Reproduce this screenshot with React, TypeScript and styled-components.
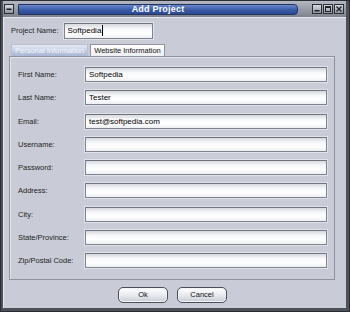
import React from 'react';
import styled, { createGlobalStyle } from 'styled-components';

const GlobalStyle = createGlobalStyle`
  html, body {
    margin: 0;
    padding: 0;
    background: #3a3e46;
  }
  * {
    box-sizing: border-box;
  }
`;

// 창 전체
const Window = styled.div`
  width: 350px;
  height: 312px;
  display: flex;
  flex-direction: column;
  background: #4c5059;
  border: 1px solid #2a2d33;
  padding: 0 3px 3px 2px;
  font-family: 'Liberation Sans', Arial, sans-serif;
  font-size: 7.5px;
  color: #1c1e22;
`;

// 제목 표시줄
const TitleBar = styled.div`
  height: 16px;
  display: flex;
  align-items: center;
  gap: 4px;
  padding: 0 2px 0 1px;
  background: linear-gradient(#b4b8c2, #7d828c);
`;

const TitleStrip = styled.div`
  flex: 1;
  height: 11px;
  display: flex;
  align-items: center;
  justify-content: center;
  border-radius: 0 4px 4px 0;
  border: 1px solid #23345e;
  background: linear-gradient(#6a86cc, #3a5aa6 55%, #2c4a94);
  color: #fff;
  font-weight: bold;
  font-size: 9px;
  letter-spacing: 0.2px;
  margin-right: 10px;
`;

const WinButton = styled.div`
  width: 10px;
  height: 10px;
  display: flex;
  align-items: center;
  justify-content: center;
  border: 1px solid #2a2d33;
  background: linear-gradient(#d8dbe2, #8f94a0);
`;

const WinButtons = styled.div`
  display: flex;
  gap: 1px;
`;

// 본문
const Body = styled.div`
  flex: 1;
  display: flex;
  flex-direction: column;
  background: #c9ccd7;
  border-top: 1px solid #e6e8ee;
  border-left: 1px solid #e6e8ee;
  padding: 4px 11px 0 5px;
`;

const ProjectRow = styled.div`
  display: flex;
  align-items: center;
  gap: 5px;
  padding-left: 2px;
  height: 17px;
`;

const Label = styled.span<{ $w?: number }>`
  width: ${(p) => (p.$w ? `${p.$w}px` : 'auto')};
  flex-shrink: 0;
  white-space: nowrap;
`;

const Field = styled.div<{ $w?: number; $h?: number }>`
  width: ${(p) => (p.$w ? `${p.$w}px` : 'auto')};
  flex: ${(p) => (p.$w ? 'none' : '1')};
  height: ${(p) => p.$h ?? 15}px;
  display: flex;
  align-items: center;
  padding: 0 3px;
  border: 1px solid #7e838e;
  border-top-color: #6e737e;
  background: linear-gradient(#d7d9df, #f7f8fa 35%, #ffffff 65%, #eceef2);
  box-shadow: 0 0 0 1px #dfe2e9;
  color: #000;
  font-size: 8px;
`;

const Caret = styled.span`
  display: inline-block;
  width: 1px;
  height: 11px;
  background: #000;
  margin-left: 1px;
`;

const Tabs = styled.div`
  display: flex;
  gap: 2px;
  margin: 5px 0 0 2px;
  height: 12px;
`;

const Tab = styled.div<{ $active?: boolean }>`
  display: flex;
  align-items: center;
  padding: 0 3px;
  height: 12px;
  border: 1px solid ${(p) => (p.$active ? '#b8c0d2' : '#8e939e')};
  border-bottom: none;
  background: ${(p) =>
    p.$active
      ? 'linear-gradient(#e2e8f4, #a9b7d4)'
      : 'linear-gradient(#ffffff, #eceef2)'};
  color: ${(p) => (p.$active ? '#f4f6fb' : '#111')};
  white-space: nowrap;
`;

const Panel = styled.div`
  height: 224px;
  display: flex;
  flex-direction: column;
  gap: 8.3px;
  padding: 10px 7px 0 8px;
  border: 1px solid #8d929d;
  box-shadow: inset 1px 1px 0 #e4e6ec;
`;

const FormRow = styled.div`
  display: flex;
  align-items: center;
`;

const Footer = styled.div`
  flex: 1;
  display: flex;
  justify-content: center;
  align-items: center;
  gap: 9px;
  padding: 1px 0 0 1px;
`;

const Button = styled.button`
  width: 50px;
  height: 16px;
  padding: 0;
  border: 1px solid #4a4e56;
  border-radius: 5px;
  background: linear-gradient(#ffffff, #e6e8ee 55%, #c7cad3);
  font-family: 'Liberation Sans', Arial, sans-serif;
  font-size: 7.5px;
  color: #111;
  box-shadow: inset 0 0 0 1px #f4f5f8;
`;

const fields: [string, string][] = [
  ['First Name:', 'Softpedia'],
  ['Last Name:', 'Tester'],
  ['Email:', 'test@softpedia.com'],
  ['Username:', ''],
  ['Password:', ''],
  ['Address:', ''],
  ['City:', ''],
  ['State/Province:', ''],
  ['Zip/Postal Code:', ''],
];

export default function App() {
  return (
    <>
      <GlobalStyle />
      <Window>
        <TitleBar>
          <WinButton>
            <svg width="6" height="6" viewBox="0 0 6 6">
              <rect x="0.5" y="2.5" width="5" height="1.5" fill="#222" />
            </svg>
          </WinButton>
          <TitleStrip>Add Project</TitleStrip>
          <WinButtons>
            <WinButton>
              <svg width="6" height="6" viewBox="0 0 6 6">
                <rect x="0.5" y="4" width="5" height="1.5" fill="#222" />
              </svg>
            </WinButton>
            <WinButton>
              <svg width="6" height="6" viewBox="0 0 6 6">
                <rect x="0.5" y="0.5" width="5" height="5" fill="none" stroke="#222" strokeWidth="1" />
                <rect x="0.5" y="0.5" width="5" height="1.5" fill="#222" />
              </svg>
            </WinButton>
            <WinButton>
              <svg width="6" height="6" viewBox="0 0 6 6">
                <path d="M0.5 0.5 L5.5 5.5 M5.5 0.5 L0.5 5.5" stroke="#222" strokeWidth="1.4" />
              </svg>
            </WinButton>
          </WinButtons>
        </TitleBar>
        <Body>
          <ProjectRow>
            <Label>Project Name:</Label>
            <Field $w={89} $h={16}>
              Softpedia
              <Caret />
            </Field>
          </ProjectRow>
          <Tabs>
            <Tab $active>Personal Information</Tab>
            <Tab>Website Information</Tab>
          </Tabs>
          <Panel>
            {fields.map(([label, value]) => (
              <FormRow key={label}>
                <Label $w={67}>{label}</Label>
                <Field>{value}</Field>
              </FormRow>
            ))}
          </Panel>
          <Footer>
            <Button>Ok</Button>
            <Button>Cancel</Button>
          </Footer>
        </Body>
      </Window>
    </>
  );
}
